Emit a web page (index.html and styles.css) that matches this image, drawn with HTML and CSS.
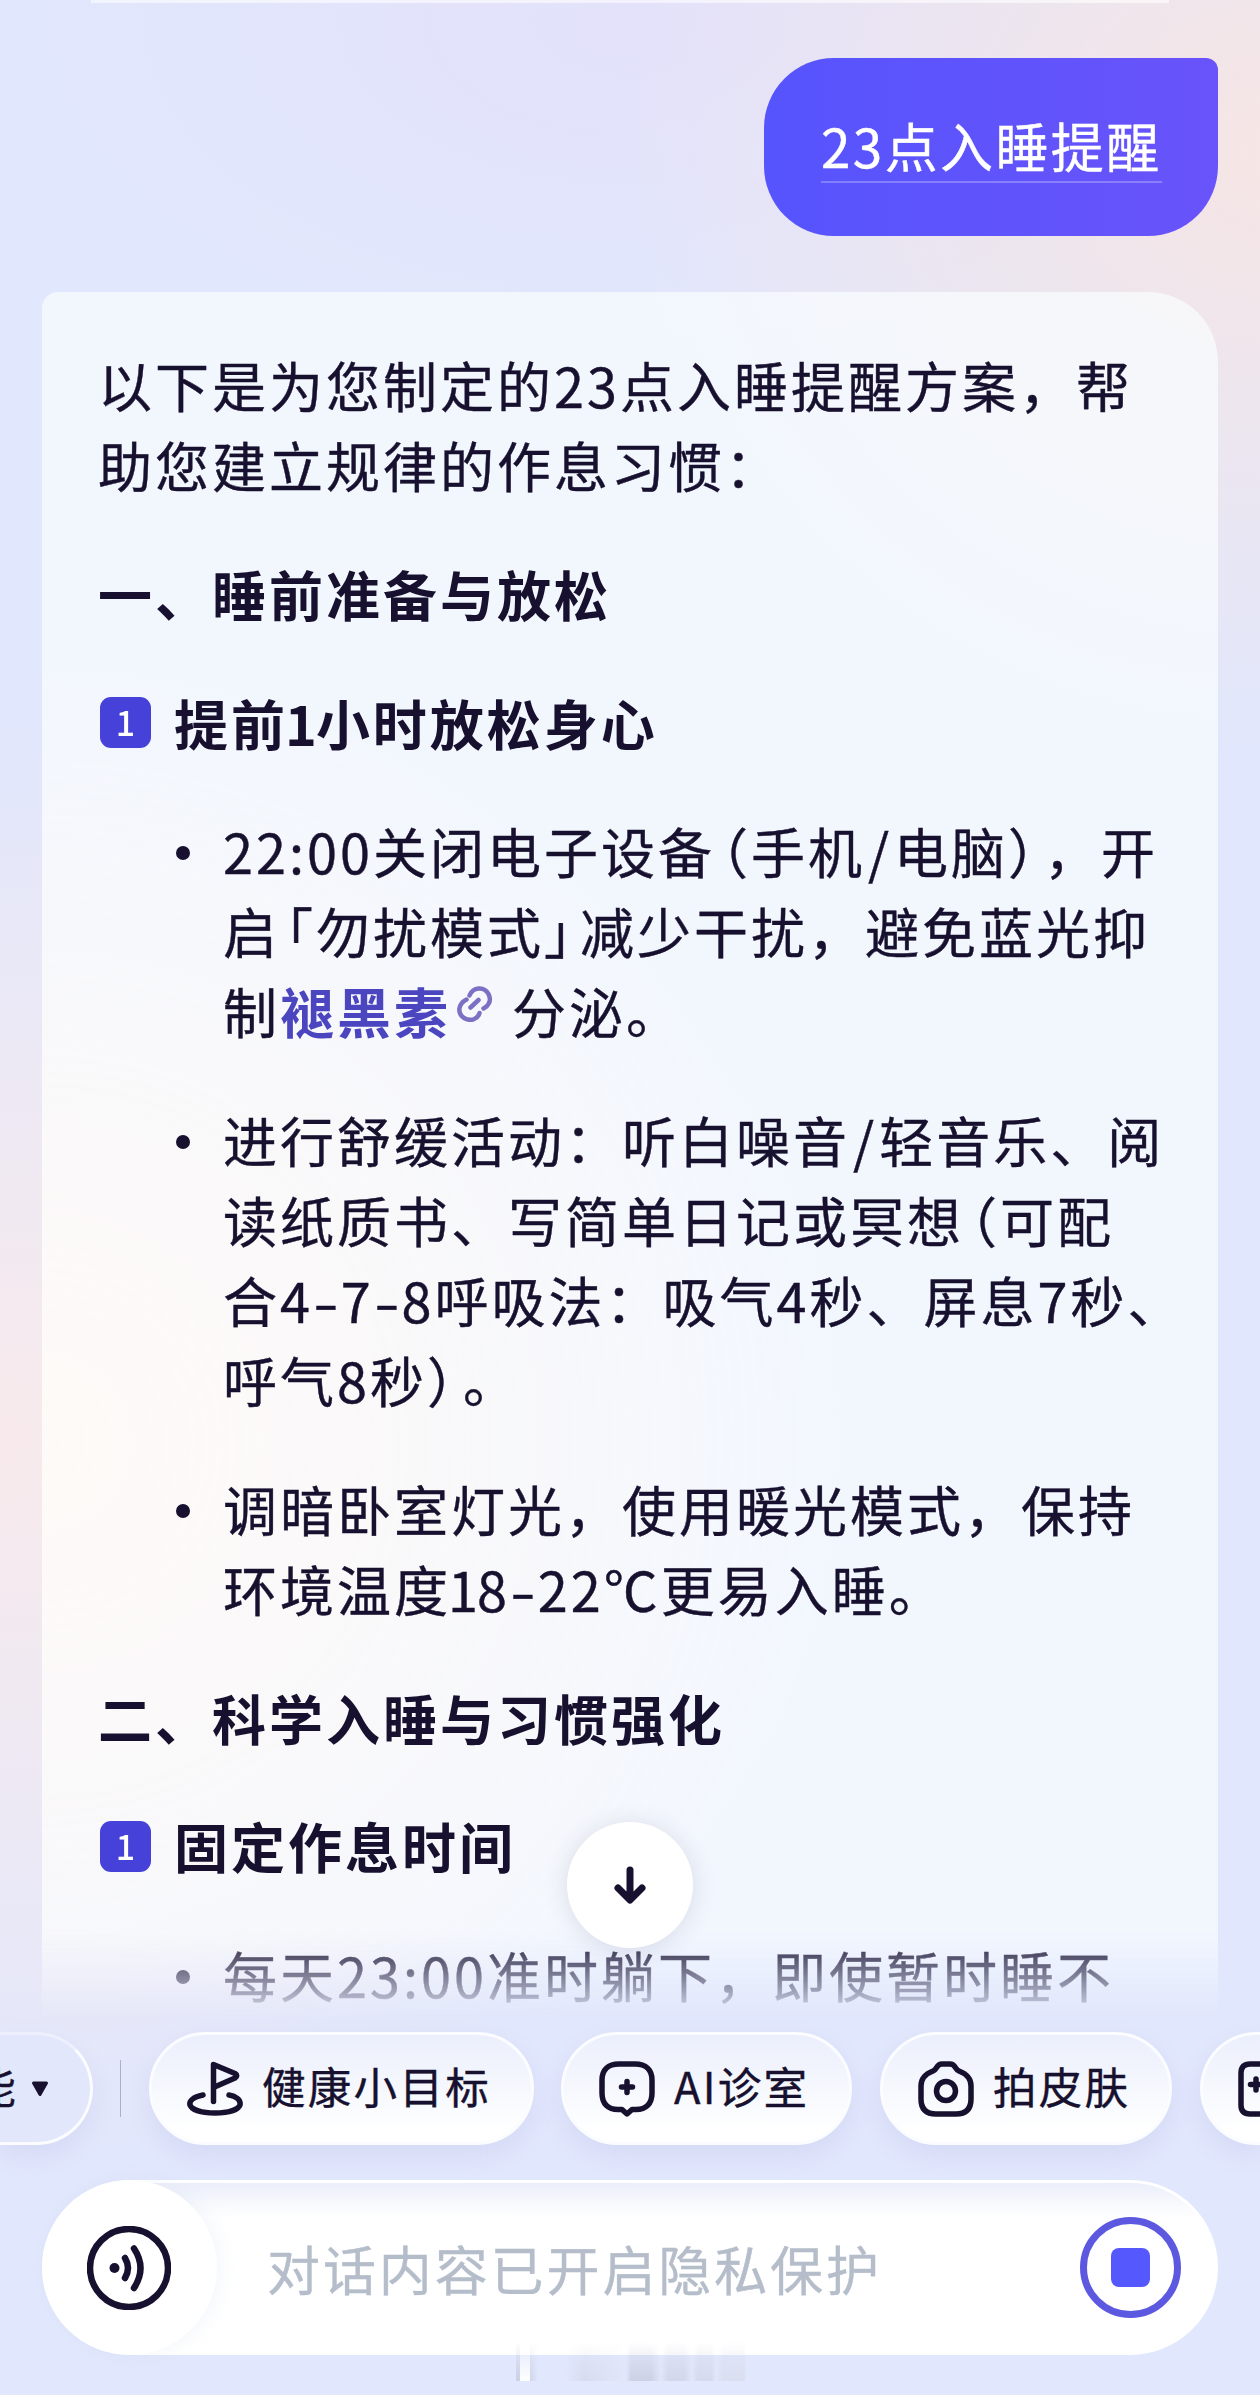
FILE: index.html
```html
<!DOCTYPE html>
<html lang="zh-CN">
  <head>
    <meta charset="UTF-8" />
    <meta name="viewport" content="width=device-width, initial-scale=1.0" />
    <title>23点入睡提醒</title>
    <link rel="stylesheet" href="styles.css">
  </head>
  <body>
    <main class="chat">
      <div class="prev-card"></div>
      <div class="user-bubble"><span>23点入睡提醒</span></div>

      <article class="answer">
        <p>以下是为您制定的23点入睡提醒方案，帮<br>助您建立规律的作息习惯：</p>
        <h2>一、睡前准备与放松</h2>
        <h3><span class="badge">1</span>提前<span class="one">1</span>小时放松身心</h3>
        <ul>
          <li>22:00关闭电子设备<span class="open">（</span>手机<span class="slash">/</span>电脑<span class="close">）</span>，开<br>启<span class="open">「</span>勿扰模式<span class="close">」</span>减少干扰，避免蓝光抑<br>制<a href="#" class="term">褪黑素<svg class="link-icon" viewBox="0 0 36 36"><path d="M12.500 9.500C16 1 27 0 31.500 8C35 15 31 20 26.500 22.500M9.500 13.500C1 18 0 27 7 32C14 36 21 33 22.500 27M13.500 21.500L21.500 14" /></svg></a>分泌。</li>
          <li>进行舒缓活动：听白噪音<span class="slash">/</span>轻音乐、阅<br>读纸质书、写简单日记或冥想<span class="open">（</span>可配<br>合4<span class="dash">-</span>7<span class="dash">-</span>8呼吸法：吸气4秒、屏息7秒、<br>呼气8秒<span class="close">）</span>。</li>
          <li>调暗卧室灯光，使用暖光模式，保持<br>环境温度<span class="one">1</span>8<span class="dash">-</span>22℃更易入睡。</li>
        </ul>
        <h2>二、科学入睡与习惯强化</h2>
        <h3><span class="badge">1</span>固定作息时间</h3>
        <ul>
          <li>每天23:00准时躺下，即使暂时睡不</li>
        </ul>
      </article>
    </main>

    <button class="scroll-down" aria-label="scroll down">
      <svg viewBox="0 0 40 44"><path d="M20 7V36M8 25L20 37L32 25" /></svg>
    </button>

    <footer class="dock">
      <nav class="chips">
        <button class="chip chip-more"><span>能</span>
          <svg class="caret" viewBox="0 0 18 16"><path d="M2.500 2H15.500L9 13.500Z" /></svg>
        </button>
        <span class="divider"></span>
        <button class="chip chip-goal">
          <svg class="icon" viewBox="0 0 56 56"><path d="M26.500 40.500V3.500L48 12.500Q51.500 14.500 48 17L27.500 26M16 34C6 36 2 40 3 44C5 49 15 52 28 52C41 52 51 49 53 44C54 39 49 35 42 34" /></svg>
          <span>健康小目标</span>
        </button>
        <button class="chip chip-clinic">
          <svg class="icon" viewBox="0 0 56 56"><path d="M20 3H36C47 3 53 9 53 19V32C53 43 47 48.500 37 48.500H33L28 53L23 48.500H19C9 48.500 3 43 3 32V19C3 9 9 3 20 3Z" /><path d="M28 20.500V31.500M22.500 26H33.500" /></svg>
          <span>AI诊室</span>
        </button>
        <button class="chip chip-skin">
          <svg class="icon" viewBox="0 0 56 56"><path d="M24 3H32C38 3 37 9 41 10C49 13 53 18 53 25V38C53 48 48 53 38 53H18C8 53 3 48 3 38V25C3 18 7 13 15 10C19 9 18 3 24 3Z" /><circle cx="28" cy="30" r="9.500" /></svg>
          <span>拍皮肤</span>
        </button>
        <button class="chip chip-report">
          <svg class="icon" viewBox="0 0 22 56"><path d="M22 3H12Q3 3 3 12V44Q3 53 12 53H22M18 18V29M12.500 23.500H22" /></svg>
        </button>
      </nav>

      <div class="input-bar">
        <button class="voice" aria-label="voice">
          <svg viewBox="0 0 84 84"><circle cx="42" cy="42" r="39" /><circle class="dot" cx="27.500" cy="42" r="5" /><path d="M38 32Q44 42 38 52M47 22.500Q60 42 47 62" /></svg>
        </button>
        <span class="placeholder">对话内容已开启隐私保护</span>
        <button class="stop" aria-label="stop"><i></i></button>
      </div>
      <div class="smudge"></div>
    </footer>
  </body>
</html>
```
FILE: styles.css
```css
* {
  box-sizing: border-box;
}
body {
  position: relative;
  display: flex;
  flex-direction: column;
  width: 1260px;
  height: 2395px;
  margin: 0;
  overflow: hidden;
  font-family: "Noto Sans CJK SC", sans-serif;
  color: #17112f;
  text-spacing-trim: space-all;
  -webkit-text-stroke: 0.400px;
  background:
    radial-gradient(ellipse 640px 600px at 1270px 150px, #f6e5e4 0%, rgba(246, 229, 228, 0) 100%),
    radial-gradient(ellipse 600px 330px at 640px 20px, rgba(229, 222, 250, 0.6) 0%, rgba(229, 222, 250, 0) 100%),
    radial-gradient(ellipse 860px 720px at 0 1440px, #f8eaec 0%, rgba(248, 234, 236, 0) 100%),
    #e1e7fc;
}
button {
  padding: 0;
  border: none;
  background: none;
  font-family: inherit;
  color: inherit;
}
svg {
  fill: none;
  stroke: #17112f;
  stroke-linecap: round;
  stroke-linejoin: round;
}

/* conversation */
.chat {
  display: flex;
  flex-direction: column;
  height: 2020px;
  padding: 0 42px;
  overflow: hidden;
  -webkit-mask-image: linear-gradient(#000 1930px, transparent 2020px);
  mask-image: linear-gradient(#000 1930px, transparent 2020px);
}
.prev-card {
  flex: none;
  height: 3px;
  margin: 0 49px;
  background: rgba(255, 255, 255, 0.6);
}
.user-bubble {
  flex: none;
  align-self: flex-end;
  width: 454px;
  height: 178px;
  margin-top: 55px;
  padding: 47px 56px 0 57px;
  border-radius: 70px 12px 70px 70px;
  background: linear-gradient(90deg, #5654fd, #6953fa);
  color: #fff;
  font-size: 53px;
  letter-spacing: 2.400px;
  line-height: 80px;
  white-space: nowrap;
}
.user-bubble span {
  display: block;
  height: 78px;
  border-bottom: 2px solid rgba(255, 255, 255, 0.25);
}
.answer {
  flex: none;
  height: 1900px;
  margin-top: 56px;
  padding: 53px 0 0 56px;
  border-radius: 16px 70px 0 0;
  background:
    radial-gradient(ellipse 800px 800px at 0 1150px, rgba(255, 250, 247, 0.8) 0%, rgba(255, 250, 247, 0) 100%),
    rgba(250, 253, 255, 0.7);
  font-size: 54px;
  letter-spacing: 3px;
  line-height: 80px;
  white-space: nowrap;
}
.answer p,
.answer h2,
.answer h3,
.answer ul {
  margin: 0 0 48.750px;
  padding: 0;
  font-size: inherit;
}
.answer h2,
.answer h3 {
  font-weight: 600;
  -webkit-text-stroke: 0;
}
.answer h3 {
  display: flex;
  align-items: center;
}
.badge {
  width: 51px;
  height: 51px;
  margin: 0 23px 0 2px;
  border-radius: 11px;
  background: #4642d9;
  color: #fff;
  font-size: 34px;
  font-weight: 500;
  letter-spacing: 0;
  line-height: 50px;
  text-align: center;
}
.answer li {
  position: relative;
  margin-bottom: 48.750px;
  padding-left: 125px;
  list-style: none;
}
.answer li::before {
  content: "";
  position: absolute;
  left: 78px;
  top: 35px;
  width: 14px;
  height: 14px;
  border-radius: 50%;
  background: #17112f;
}
/* punctuation is set tighter than a full em */
.open,
.close {
  font-feature-settings: "halt";
}
.open {
  padding-left: 6px;
}
.close {
  padding-right: 6px;
}
.slash {
  margin: 0 2px 0 3px;
}
.dash {
  display: inline-block;
  margin: 0 2px 0 4px;
  transform: scaleX(1.350);
}
.one {
  margin: 0 -4px 0 -3px;
}
.term {
  color: #4b45c0;
  font-weight: 600;
  text-decoration: none;
  -webkit-text-stroke: 0;
}
.link-icon {
  width: 36px;
  height: 36px;
  margin: -10px 19px 0 6px;
  vertical-align: 12px;
  stroke: #7a70c4;
  stroke-width: 4.500;
}

.scroll-down {
  position: absolute;
  left: 567px;
  top: 1822px;
  display: flex;
  justify-content: center;
  align-items: center;
  width: 126px;
  height: 126px;
  border-radius: 50%;
  background: #fff;
  box-shadow: 0 2px 24px rgba(60, 50, 90, 0.14);
}
.scroll-down svg {
  width: 40px;
  height: 44px;
  stroke-width: 7;
}

/* bottom area */
.dock {
  padding-top: 12px;
}
.chips {
  display: flex;
  align-items: center;
  height: 113px;
}
.chip {
  flex: none;
  display: flex;
  align-items: center;
  height: 113px;
  padding-left: 35px;
  border: 3px solid #fafcff;
  border-radius: 57px;
  background: linear-gradient(#ebeffc, #fff 90%);
  box-shadow: 0 10px 24px rgba(130, 120, 200, 0.12);
  font-size: 43.500px;
  letter-spacing: 2.300px;
  white-space: nowrap;
}
.chip span {
  height: 64px;
  line-height: 58px;
}
.icon {
  flex: none;
  width: 56px;
  height: 56px;
  margin-right: 19px;
  stroke-width: 5.500;
}
.chip-more {
  justify-content: flex-end;
  width: 93px;
  padding: 0 41px 0 0;
  border-top-color: rgba(250, 252, 255, 0.5);
  border-left: none;
  border-radius: 0 57px 57px 0;
  background: #e3e7fb;
}
.caret {
  flex: none;
  width: 18px;
  height: 16px;
  margin-left: 13px;
  fill: #17112f;
  stroke-width: 3;
}
.divider {
  flex: none;
  width: 1px;
  height: 57px;
  margin: 0 28px 0 27px;
  background: #aab0ce;
}
.chip-goal {
  width: 385px;
  margin-right: 27px;
}
.chip-clinic {
  width: 291px;
  margin-right: 28px;
}
.chip-skin {
  width: 292px;
  margin-right: 28px;
}
.chip-report {
  width: 60px;
  border-right: none;
  border-radius: 57px 0 0 57px;
}
.chip-report .icon {
  width: 22px;
  margin-right: 0;
}
.input-bar {
  display: flex;
  align-items: center;
  width: 1176px;
  height: 175px;
  margin: 35px 0 0 42px;
  border: 3px solid #fff;
  border-radius: 88px;
  background: linear-gradient(#ebeffa, #fff 20%);
}
.voice {
  display: flex;
  justify-content: center;
  align-items: center;
  width: 175px;
  height: 175px;
  margin-left: -3px;
  border-radius: 50%;
  background: #fff;
  box-shadow: 6px 0 18px rgba(190, 200, 225, 0.15);
}
.voice svg {
  width: 84px;
  height: 84px;
  margin-right: 1px;
  stroke-width: 6.500;
}
.voice .dot {
  fill: #17112f;
  stroke: none;
}
.placeholder {
  flex: 1;
  margin-left: 50px;
  color: #b5bdca;
  font-size: 53px;
  letter-spacing: 2.900px;
  line-height: 80px;
}
.stop {
  display: flex;
  justify-content: center;
  align-items: center;
  width: 101px;
  height: 101px;
  margin-right: 34px;
  border: 7px solid #5c59e0;
  border-radius: 50%;
}
.stop i {
  width: 39px;
  height: 39px;
  border-radius: 8px;
  background: #5559fd;
}
/* faint streaks along the lower edge */
.smudge {
  position: absolute;
  left: 516px;
  top: 2342px;
  width: 230px;
  height: 39px;
  background: linear-gradient(90deg, rgba(190, 194, 215, 0.6) 0 4px, #fff 4px 14px, rgba(190, 194, 215, 0.5) 14px, transparent 22px 50px, rgba(200, 204, 220, 0.4) 68px, rgba(215, 219, 235, 0.3) 95px, transparent 110px, rgba(190, 194, 212, 0.6) 115px 135px, transparent 145px, rgba(195, 199, 216, 0.5) 152px 168px, transparent 176px, rgba(200, 204, 220, 0.5) 182px 195px, transparent 200px, rgba(210, 214, 228, 0.5) 208px 228px, transparent 230px);
  -webkit-mask-image: linear-gradient(transparent, #000);
  mask-image: linear-gradient(transparent, #000);
}
```
